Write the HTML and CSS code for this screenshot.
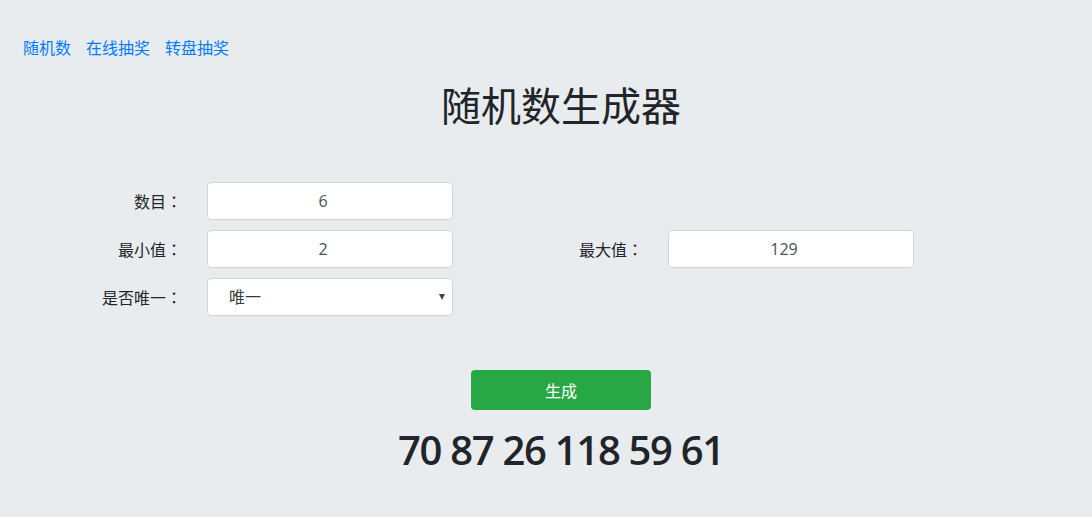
FILE: index.html
```html
<!DOCTYPE html>
<html lang="zh-CN">
<head>
    <meta charset="UTF-8">
    <meta name="viewport" content="width=device-width, initial-scale=1.0">
    <title>随机数生成器</title>
    <link rel="stylesheet" href="styles.css">
</head>
<body>
    <nav class="top-nav">
        <a href="#">随机数</a>
        <a href="#">在线抽奖</a>
        <a href="#">转盘抽奖</a>
    </nav>

    <div class="main">
        <h1 class="title">随机数生成器</h1>

        <form class="gen-form" onsubmit="return false">
            <label class="field-label" for="count">数目<span class="colon" lang="ja">：</span></label>
            <input class="field" id="count" type="text" value="6">
            <span></span>
            <span></span>

            <label class="field-label" for="min">最小值<span class="colon" lang="ja">：</span></label>
            <input class="field" id="min" type="text" value="2">
            <label class="field-label" for="max">最大值<span class="colon" lang="ja">：</span></label>
            <input class="field" id="max" type="text" value="129">

            <label class="field-label" for="unique">是否唯一<span class="colon" lang="ja">：</span></label>
            <div class="select-wrap">
                <select class="field select" id="unique">
                    <option>唯一</option>
                    <option>可重复</option>
                </select>
            </div>
        </form>

        <div class="actions">
            <button class="btn-generate" type="button">生成</button>
        </div>
        <div class="result">70 87 26 118 59 61</div>
    </div>
</body>
</html>
```

FILE: styles.css
```css
body {
    margin: 0;
    padding: 0;
    background: #e9ecef;
    color: #212529;
    font-family: "Open Sans", "Noto Sans CJK SC", sans-serif;
    font-size: 16px;
    line-height: 1.5;
}
.top-nav {
    padding: 36px 23px 0;
    display: flex;
    gap: 15px;
}
.top-nav a {
    color: #007bff;
    text-decoration: none;
}
.main {
    margin-left: 30px;
}
.title {
    margin: 22px 0 0;
    text-align: center;
    font-size: 40px;
    font-weight: 400;
    line-height: 48px;
}
.gen-form {
    margin-top: 52px;
    display: grid;
    grid-template-columns: 154px 246px 169px 246px;
    column-gap: 23px;
    row-gap: 10px;
    align-items: center;
}
.field-label {
    text-align: right;
    line-height: 24px;
    padding-right: 2px;
}
/* centred full-width colon */
.colon {
    font-family: "Noto Sans CJK JP", sans-serif;
}
.field {
    box-sizing: border-box;
    width: 100%;
    height: 38px;
    padding: 6px 26px 6px 12px;
    border: 1px solid #ced4da;
    border-radius: 4px;
    background: #fff;
    color: #495057;
    font-family: inherit;
    font-size: 16px;
    text-align: center;
}
.select-wrap {
    position: relative;
}
.select {
    appearance: none;
    -webkit-appearance: none;
    text-align: left;
    padding-left: 21px;
    color: #343a40;
}
/* small arrow on the right of the dropdown */
.select-wrap::after {
    content: "";
    position: absolute;
    right: 8px;
    top: 16px;
    border-left: 3.5px solid transparent;
    border-right: 3.5px solid transparent;
    border-top: 6px solid #444;
}
.actions {
    margin-top: 54px;
    text-align: center;
}
.btn-generate {
    width: 180px;
    height: 40px;
    border: none;
    border-radius: 4px;
    background: #28a745;
    color: #fff;
    font-family: inherit;
    font-size: 16px;
    cursor: pointer;
}
.result {
    margin-top: 16px;
    text-align: center;
    font-size: 40px;
    font-weight: 600;
    line-height: 48px;
    letter-spacing: -1.3px;
}
```
